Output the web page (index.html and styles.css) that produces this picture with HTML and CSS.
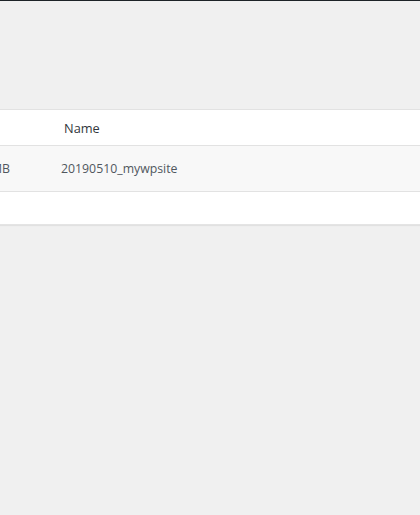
FILE: index.html
```html
<!DOCTYPE html>
<html>
<head>
<meta charset="utf-8">
<link rel="stylesheet" href="styles.css">
</head>
<body>
<div class="topbar"></div>
<div class="page">
  <div class="table">
    <div class="row head">
      <div class="cell size"></div>
      <div class="cell name">Name</div>
    </div>
    <div class="row alt">
      <div class="cell size"><span class="sz">1.2 MB</span></div>
      <div class="cell name data">20190510_mywpsite</div>
    </div>
    <div class="row empty"></div>
  </div>
</div>
</body>
</html>
```
FILE: styles.css
```css
html, body {
  margin: 0;
  padding: 0;
}
body {
  background: #f0f0f0;
  font-family: "Open Sans", "Noto Sans", sans-serif;
  font-size: 12.3px;
  width: 420px;
  height: 515px;
  overflow: hidden;
}
.topbar {
  height: 1px;
  background: #1d2327;
}
.page {
  padding-top: 108px;
}
.table {
  background: #fff;
  border-top: 1px solid #e2e2e2;
  box-shadow: 0 1px 1px rgba(0,0,0,0.06);
  border-bottom: 1px solid #e4e4e4;
}
.row {
  display: flex;
  align-items: center;
  border-bottom: 1px solid #e2e2e2;
}
.row.head {
  height: 35px;
  color: #32373c;
  font-size: 12.8px;
}
.row.alt {
  height: 45px;
  background: #f8f8f8;
  color: #50575e;
}
.row.empty {
  height: 32px;
  border-bottom: none;
}
.cell.size {
  width: 61px;
  flex: none;
  display: flex;
  justify-content: flex-end;
  overflow: hidden;
}
.sz {
  margin-right: 51px;
  white-space: nowrap;
}
.head .cell.name {
  padding-left: 3px;
}
```
